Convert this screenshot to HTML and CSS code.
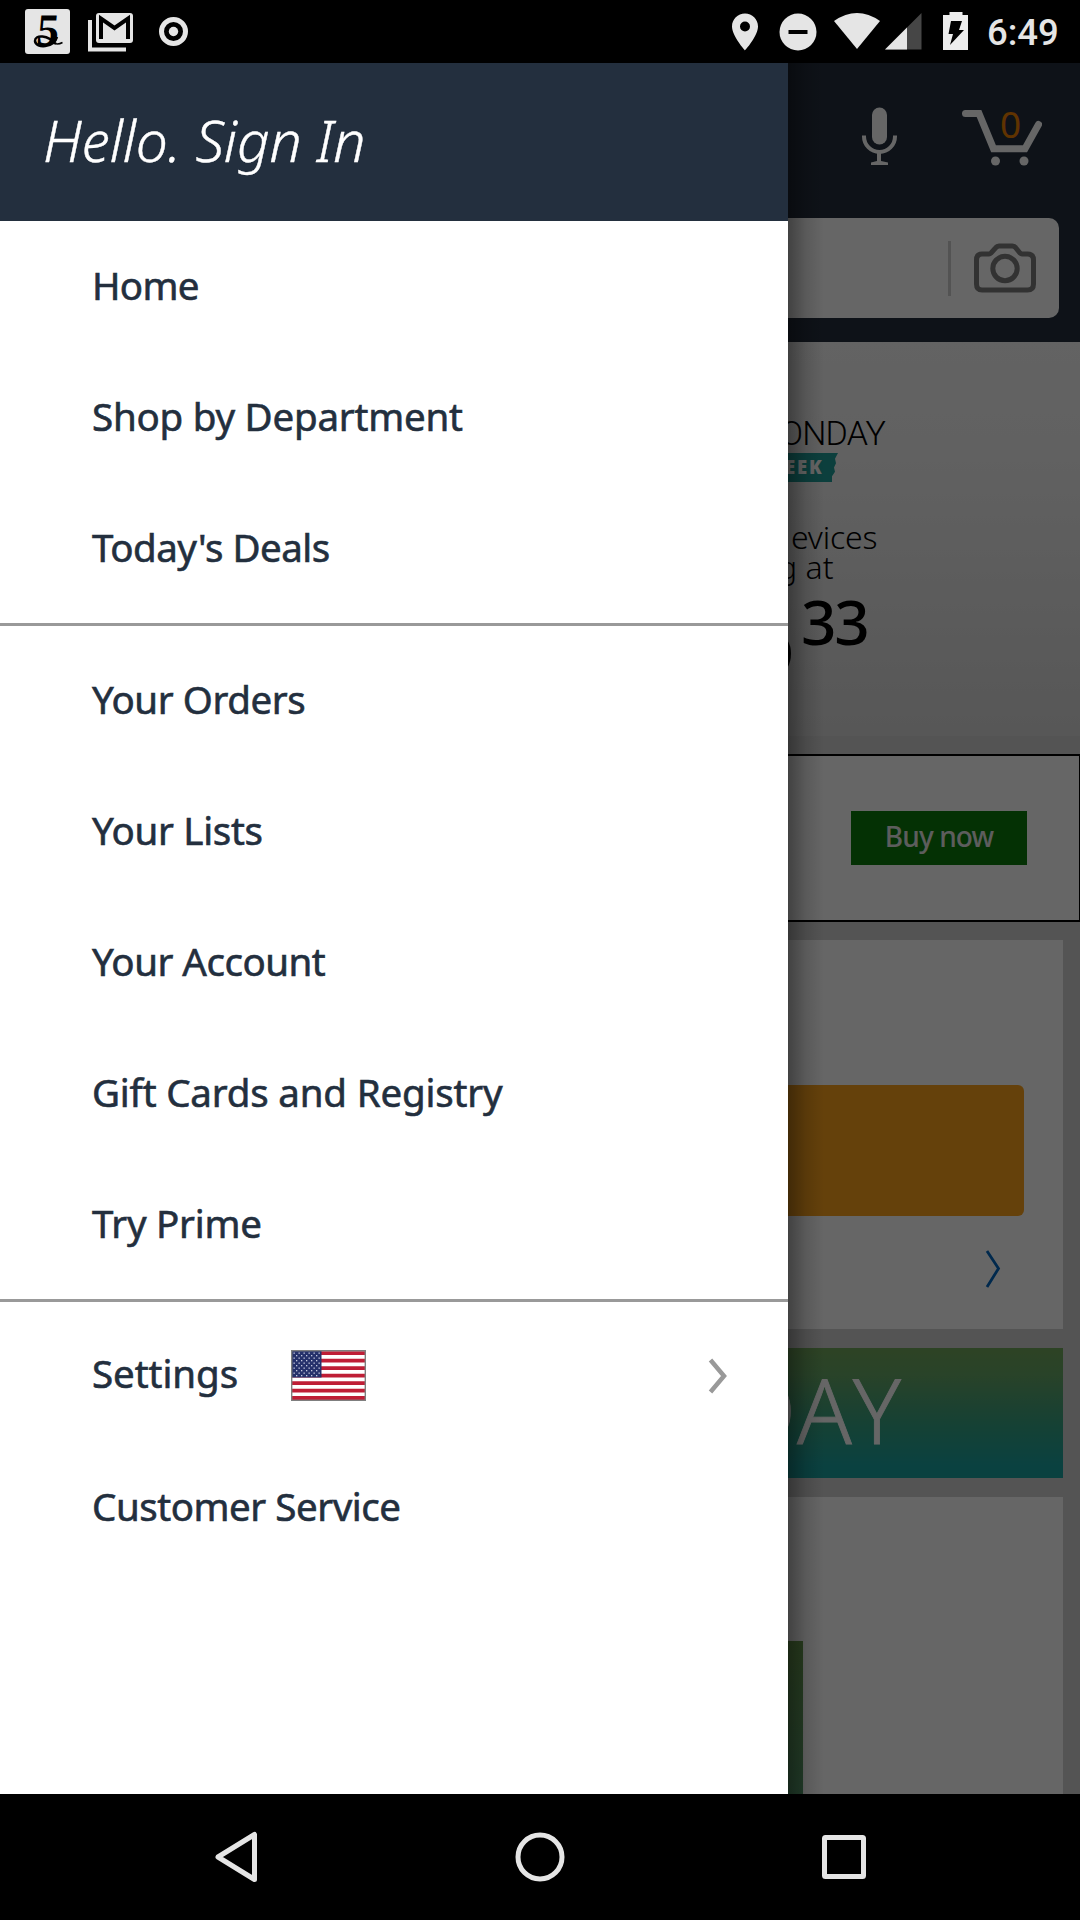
FILE: index.html
```html
<!DOCTYPE html>
<html lang="en">
<head>
<meta charset="utf-8">
<title>Menu</title>
<link rel="stylesheet" href="styles.css">
</head>
<body>
<div class="phone">
  <header class="status">
    <svg class="status-left" width="200" height="63" viewBox="0 0 200 63">
      <rect x="25" y="9" width="45" height="45" rx="3" fill="#e5e5e5"/>
      <text class="badge-five" x="39.500" y="45" transform="skewX(-5)">5</text>
      <path d="M56 44 C48 35 35 34 35 41 C36 49 54 48 57 37" fill="none" stroke="#000" stroke-width="2.500"/>
      <path d="M50 41 Q56 46 62.500 42.500" fill="none" stroke="#000" stroke-width="1.500"/>
      <path d="M90 20V49.500H126" fill="none" stroke="#e5e5e5" stroke-width="4"/>
      <rect x="96" y="13" width="37" height="30" rx="3" fill="#e5e5e5"/>
      <path d="M101 39V18.500L114.500 28L128 18.500V39" fill="none" stroke="#000" stroke-width="4"/>
      <circle cx="173.500" cy="31.500" r="12" fill="none" stroke="#e5e5e5" stroke-width="5"/>
      <circle cx="173.500" cy="31.500" r="4.700" fill="#e5e5e5"/>
    </svg>
    <div class="status-right">
      <svg width="244" height="63" viewBox="730 0 244 63">
        <path fill="#e5e5e5" fill-rule="evenodd" d="M745 13.500c-7.200 0-13 5.800-13 13C732 36 745 50.500 745 50.500S758 36 758 26.500c0-7.200-5.800-13-13-13zm0 8a5 5 0 1 1 0 10 5 5 0 0 1 0-10z"/>
        <circle cx="798" cy="32" r="18.500" fill="#e5e5e5"/>
        <path d="M788.500 32h19" stroke="#000" stroke-width="4"/>
        <path d="M834 21Q857 5 880 21L857 49z" fill="#e5e5e5"/>
        <path d="M885 49.500L921.500 13V49.500z" fill="#464646"/>
        <path d="M885 49.500L907 27.500V49.500z" fill="#e5e5e5"/>
        <path d="M943 15h6.500v-3h13v3h5.500v35h-25z" fill="#ededed"/>
        <path d="M951 21h11l-3 9h5L950 45l3-11h-4.500z" fill="#000"/>
      </svg>
      <span class="clock">6:49</span>
    </div>
  </header>

  <main class="stage">
    <div class="app">
      <div class="topbar">
        <div class="actions">
          <svg class="mic" width="38" height="60" viewBox="860 106 38 60">
            <rect x="872" y="107.500" width="15" height="37" rx="7.500" fill="#fff"/>
            <path d="M864 135.500v1a15.500 15.500 0 0 0 31 0v-1" fill="none" stroke="#fff" stroke-width="4"/>
            <path d="M877 153h4v8l7 1.500v2.500h-17v-2.500l6-1.500z" fill="#fff"/>
          </svg>
          <div class="cart">
            <svg width="82" height="60" viewBox="960 106 82 60">
              <path d="M965.500 113.500H979L993.500 148.700H1025L1038.500 124.500" fill="none" stroke="#fff" stroke-width="7" stroke-linecap="round"/>
              <circle cx="995.500" cy="161" r="4.500" fill="#fff"/><circle cx="1024" cy="161" r="4.500" fill="#fff"/>
            </svg>
            <span class="cart-count">0</span>
          </div>
        </div>
        <div class="search">
          <span class="search-rule"></span>
          <svg width="62" height="50" viewBox="974 243 62 50">
            <path d="M982 254h7q1 0 2-1l5-5.500q1-1.500 3-1.500h13.500q2 0 3 1.500l4.500 5.500q1 1 2 1h5.500q6 0 6 6v24q0 6-6 6h-45.500q-5.500 0-5.500-6v-24q0-6 5.500-6z" fill="none" stroke="#7d7d7d" stroke-width="5"/>
            <circle cx="1005" cy="268.500" r="12.200" fill="none" stroke="#7d7d7d" stroke-width="5"/>
          </svg>
        </div>
      </div>

      <section class="hero">
        <div class="hero-title">ONDAY</div>
        <div class="hero-tag">EEK</div>
        <div class="hero-line">evices</div>
        <div class="hero-line hero-line-2">g at</div>
        <div class="price"><span class="price-main">5</span><span class="price-cents">33</span></div>
      </section>

      <section class="ad"><span class="buy">Buy now</span></section>

      <section class="card signin">
        <div class="signin-button"></div>
        <svg width="16" height="40" viewBox="986 1248 16 40"><path d="M988 1251l11.500 17.500L988 1287" fill="none" stroke="#0066c0" stroke-width="2.800"/></svg>
      </section>

      <section class="card day">DAY</section>

      <section class="card deals"><div class="deal-image"></div></section>
    </div>

    <div class="scrim"></div>

    <nav class="drawer">
      <div class="hello"><span>Hello. Sign In</span></div>
      <ul class="group">
        <li><span class="t-home">Home</span></li>
        <li><span class="t-shop">Shop by Department</span></li>
        <li><span class="t-deals">Today's Deals</span></li>
      </ul>
      <ul class="group">
        <li><span class="t-orders">Your Orders</span></li>
        <li><span class="t-lists">Your Lists</span></li>
        <li><span class="t-account">Your Account</span></li>
        <li><span class="t-gift">Gift Cards and Registry</span></li>
        <li><span class="t-prime">Try Prime</span></li>
      </ul>
      <ul class="group last">
        <li class="settings"><span class="t-settings">Settings</span>
          <svg class="flag" width="75" height="51" viewBox="0 0 75 51">
            <defs>
              <pattern id="stars" x="2" y="2" width="5" height="5" patternUnits="userSpaceOnUse">
                <rect x="0.500" y="0.500" width="1.300" height="1.300" fill="#c5cae0"/>
                <rect x="3" y="3" width="1.300" height="1.300" fill="#c5cae0"/>
              </pattern>
            </defs>
            <rect width="75" height="51" fill="#fff"/>
            <path d="M0 3.200H75M0 10.700H75M0 18.200H75M0 25.700H75M0 33.200H75M0 40.700H75M0 48H75" stroke="#bf1e36" stroke-width="3.800"/>
            <rect width="30.500" height="27.500" fill="#26316b"/>
            <rect x="2" y="2" width="28" height="25" fill="url(#stars)"/>
            <rect x="0.700" y="0.700" width="73.600" height="49.600" fill="none" stroke="#7f7f7f" stroke-width="1.400"/>
          </svg>
          <svg class="chev" width="20" height="36" viewBox="0 0 20 36"><path d="M2.500 2L16 18L2.500 34" fill="none" stroke="#999" stroke-width="4.500"/></svg>
        </li>
        <li><span class="t-service">Customer Service</span></li>
      </ul>
    </nav>
  </main>

  <footer class="navbar">
    <svg width="1080" height="126" viewBox="0 1794 1080 126" fill="none" stroke="#e5e5e5" stroke-width="5" stroke-linejoin="round">
      <path d="M218 1857L254.500 1834.500V1879.500z"/>
      <circle cx="540" cy="1857" r="22"/>
      <rect x="824.500" y="1837.500" width="39" height="39" rx="1"/>
    </svg>
  </footer>
</div>
</body>
</html>
```
FILE: styles.css
```css
* { box-sizing: border-box; }
body { margin: 0; background: #000; font-family: "Noto Sans", "Open Sans", sans-serif; }
svg { display: block; flex: none; }
.phone { width: 1080px; height: 1920px; display: flex; flex-direction: column; overflow: hidden; }

.status { height: 63px; display: flex; justify-content: space-between; background: #000; }
.badge-five { font: bold 45px "Liberation Serif", serif; }
.status-right { display: flex; }
.clock { width: 93px; margin-left: 13px; color: #e5e5e5; font: 500 36.5px/66px Roboto, sans-serif; }

.stage { position: relative; height: 1731px; overflow: hidden; }
.app { height: 1731px; display: flex; flex-direction: column; background: #d2d2d2; }
.scrim { position: absolute; inset: 0; background: rgba(0, 0, 0, 0.6); }

.topbar { height: 279px; flex: none; background: #232f3e; }
.actions { height: 155px; padding: 43px 38px 0 0; display: flex; justify-content: flex-end; gap: 62px; }
.cart { position: relative; }
.cart-count { position: absolute; left: 40px; top: -1px; color: #f08000; font: 37px/38px "Noto Sans", sans-serif; }
.search { height: 100px; margin-right: 21px; padding-right: 23px; border-radius: 10px; background: #fff; display: flex; justify-content: flex-end; align-items: center; gap: 23px; }
.search-rule { width: 3px; height: 55px; background: #d0d0d0; }

.hero { height: 394px; flex: none; margin-bottom: 18px; padding-left: 788px; background: linear-gradient(#f7f7f7, #f2f2f2 30%, #d9d9d9); color: #000; white-space: nowrap; }
.hero-title { height: 111px; padding-top: 71px; font: 300 34px/40px Roboto, sans-serif; letter-spacing: -0.800px; margin-left: -8px; }
.hero-tag { width: 50px; height: 29px; color: #fff; background: #1f9e98; font: 800 18.5px/28px "Open Sans", sans-serif; letter-spacing: 1.800px; text-indent: -3px; clip-path: polygon(0 0, 100% 0, 94% 20%, 96% 35%, 92% 50%, 94% 65%, 88% 80%, 88% 100%, 0 100%); }
.hero-line { height: 30px; margin-top: 40px; font: 300 32px/30px "Noto Sans", sans-serif; letter-spacing: -0.200px; margin-left: 3px; }
.hero-line-2 { margin-top: 0; margin-left: -10px; letter-spacing: 0; }
.price { display: flex; height: 100px; margin-top: 4px; }
.price-main { font: 500 110px/100px "Noto Sans", sans-serif; margin-left: -54px; width: 67px; }
.price-cents { font: 500 62px/60px "Noto Sans", sans-serif; letter-spacing: -2.300px; margin-top: 5px; }

.ad { height: 168px; flex: none; margin-bottom: 18px; padding-right: 52px; border: 2px solid #000; border-right-width: 1px; background: #fff; display: flex; justify-content: flex-end; align-items: center; }
.buy { width: 176px; height: 54px; background: #0a7a0a; color: #e8e8e8; text-align: center; font: 500 28px/51px "Noto Sans", sans-serif; letter-spacing: -0.900px; }

.card { flex: none; margin-right: 17px; margin-bottom: 19px; background: #fff; }
.signin { height: 389px; padding: 145px 39px 0 0; display: flex; flex-direction: column; align-items: flex-end; }
.signin-button { width: 900px; height: 131px; margin-bottom: 32px; border-radius: 6px; background: #fca41c; }
.signin svg { margin-right: 23px; }
.day { height: 130px; padding-left: 732px; background: linear-gradient(#72a85c, #67a766 20%, #35a284 60%, #1ba3a1 90%); color: #fff; font: 300 90px/122px "Noto Sans", sans-serif; font-kerning: none; letter-spacing: 1px; -webkit-text-stroke: 0.8px #fff; }
.deals { height: 297px; margin-bottom: 0; padding-top: 144px; }
.deal-image { width: 803px; height: 153px; background: linear-gradient(#699c4e, #569c6c); }

.drawer { position: absolute; left: 0; top: 0; width: 788px; height: 1731px; background: #fff; color: #232f3e; }
.drawer::after { content: ""; position: absolute; left: 788px; top: 0; width: 36px; height: 1731px; background: linear-gradient(90deg, rgba(0,0,0,.36), rgba(0,0,0,.12) 50%, transparent); }
.hello { height: 158px; padding-left: 43px; background: #232f3e; color: #fff; font: italic 300 57px/154px "Noto Sans", sans-serif; letter-spacing: -0.200px; -webkit-text-stroke: 0.4px #fff; }
.group { margin: 0; padding: 9px 0; list-style: none; border-bottom: 3px solid #999; }
.hello + .group { padding-top: 0; }
.group.last { padding-top: 8px; border: 0; }
.group li { height: 131px; padding-left: 92px; display: flex; align-items: center; font-weight: 400; font-size: 38.5px; line-height: 60px; white-space: nowrap; -webkit-text-stroke: 0.6px #232f3e; }
.group li span { padding-bottom: 4px; }
.group .settings span { padding-bottom: 6px; }
.group .t-service { padding-bottom: 2px; }
.t-home { letter-spacing: -0.700px; }
.t-shop { letter-spacing: -0.230px; }
.t-deals { letter-spacing: -0.500px; }
.t-orders { letter-spacing: -0.400px; }
.t-lists { letter-spacing: -0.300px; }
.t-account { letter-spacing: -0.500px; }
.t-gift { letter-spacing: -0.180px; }
.t-prime { letter-spacing: -0.250px; }
.t-settings { width: 146px; letter-spacing: -0.050px; }
.t-service { letter-spacing: -0.450px; }
.flag { margin-left: 53px; }
.chev { margin-left: auto; margin-right: 60px; }
.flag, .chev { -webkit-text-stroke: 0; }

.navbar { height: 126px; background: #000; }
```
